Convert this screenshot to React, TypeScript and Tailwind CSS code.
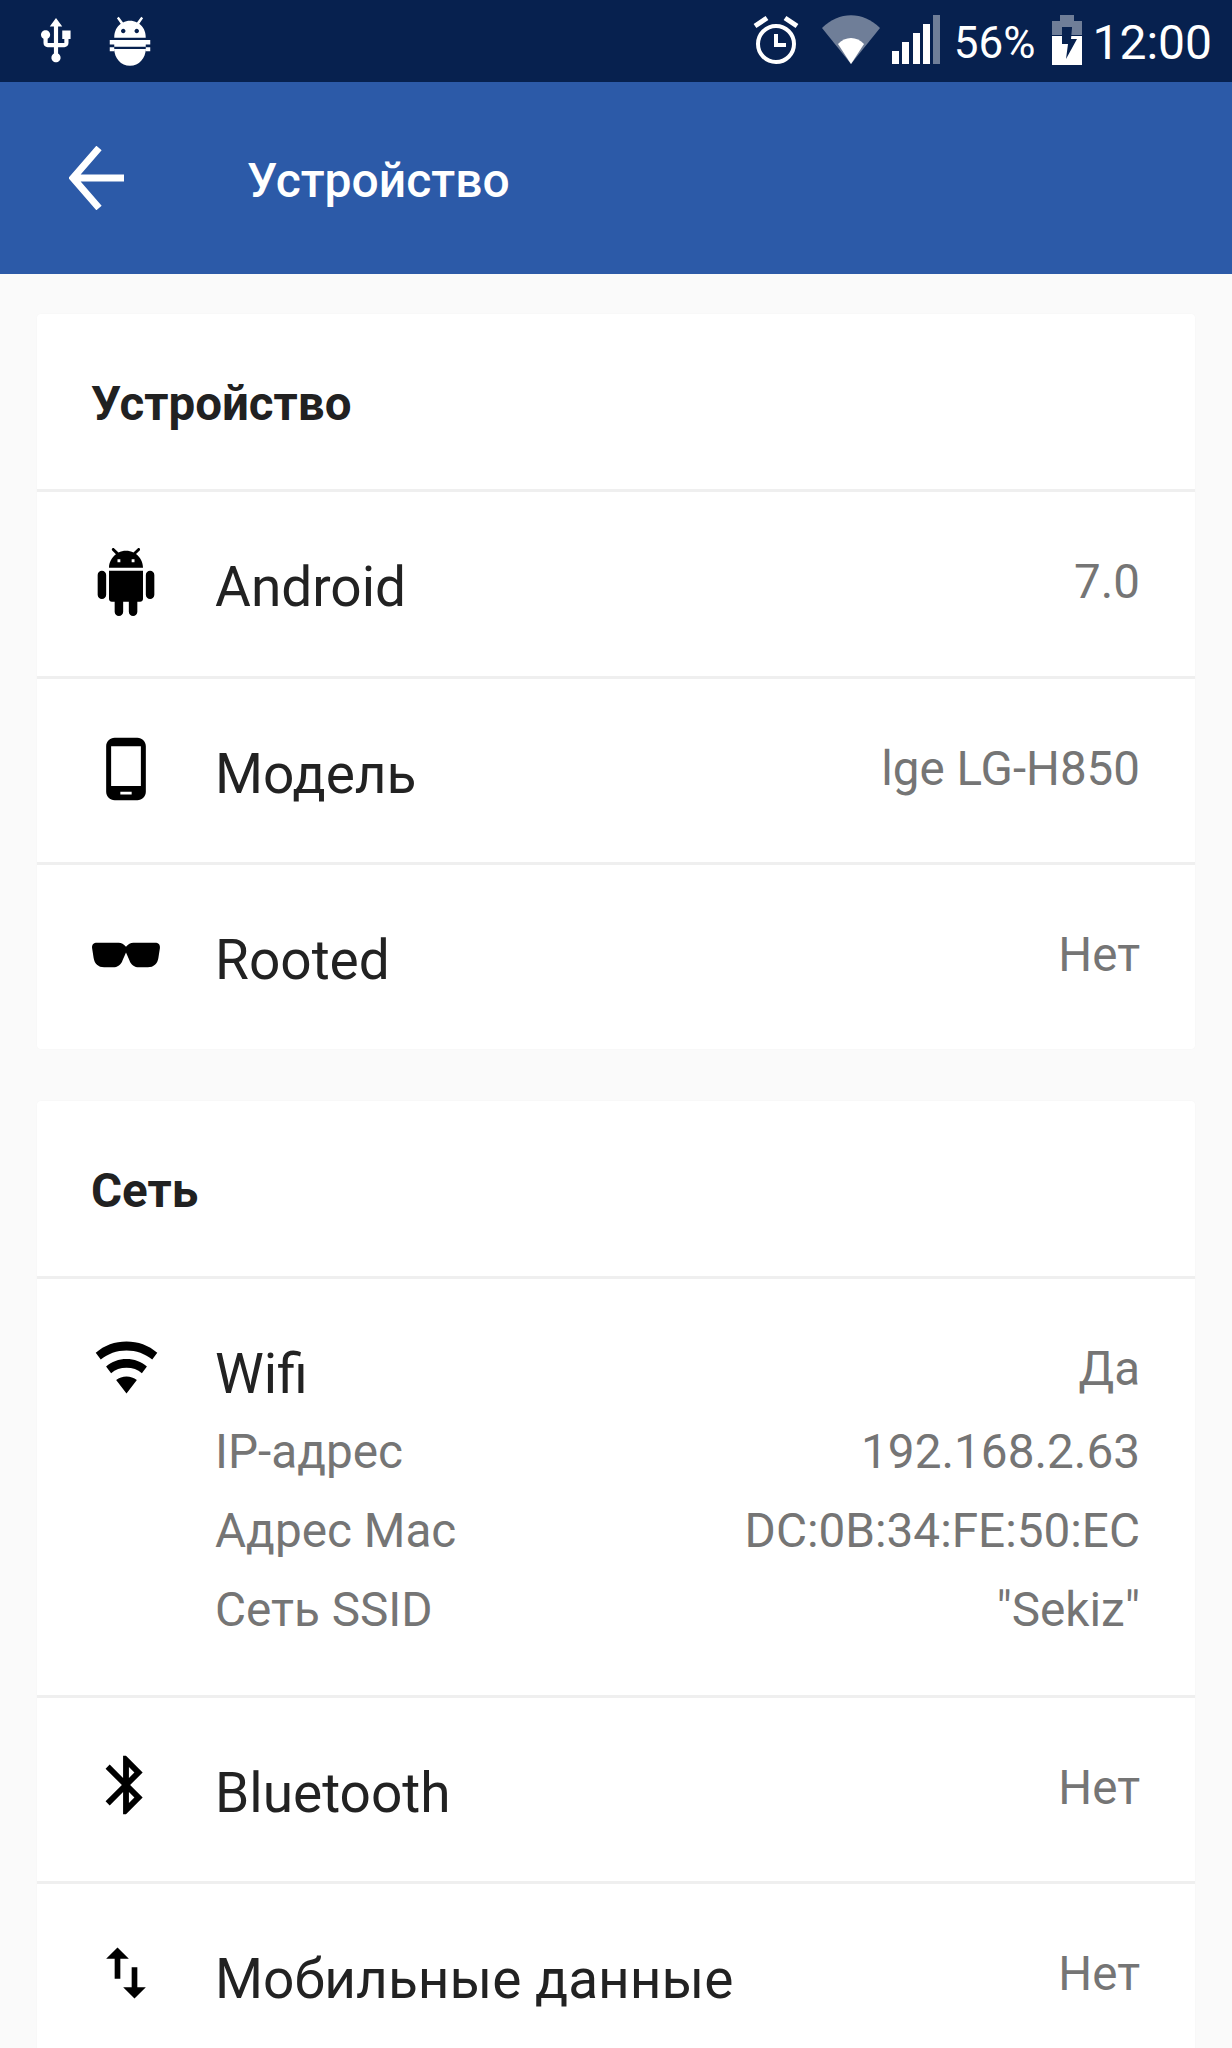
import type { ReactNode } from "react";

const PATHS = {
  android: "M6 18c0 .55.45 1 1 1h1v3.5c0 .83.67 1.5 1.5 1.5s1.5-.67 1.5-1.5V19h2v3.5c0 .83.67 1.5 1.5 1.5s1.5-.67 1.5-1.5V19h1c.55 0 1-.45 1-1V8H6v10zM3.5 8C2.67 8 2 8.67 2 9.5v7c0 .83.67 1.5 1.5 1.5S5 17.33 5 16.5v-7C5 8.67 4.33 8 3.5 8zm17 0c-.83 0-1.5.67-1.5 1.5v7c0 .83.67 1.5 1.5 1.5s1.5-.67 1.5-1.5v-7c0-.83-.67-1.5-1.5-1.5zm-4.97-5.84l1.3-1.3c.2-.2.2-.51 0-.71-.2-.2-.51-.2-.71 0l-1.48 1.48C13.85 1.23 12.95 1 12 1c-.96 0-1.86.23-2.66.63L7.85.15c-.2-.2-.51-.2-.71 0-.2.2-.2.51 0 .71l1.31 1.31C6.97 3.26 6 5.01 6 7h12c0-1.99-.97-3.75-2.47-4.84zM10 5H9V4h1v1zm5 0h-1V4h1v1z",
  phone: "M16 1H8C6.34 1 5 2.34 5 4v16c0 1.66 1.34 3 3 3h8c1.66 0 3-1.34 3-3V4c0-1.66-1.34-3-3-3zm-2 20h-4v-1h4v1zm3.25-3H6.75V4h10.5v14z",
  glasses: "M2.6 8h7c1 0 1.6.4 2.4 1.3.8-.9 1.4-1.3 2.4-1.3h7c1.1 0 1.7.6 1.6 1.7l-.5 3.3c-.3 1.9-1.5 3-3.4 3h-2.8c-1.6 0-2.7-.8-3.2-2.3L12 11.2l-1.1 2.5C10.400 15.200 9.300 16 7.700 16H4.900c-1.900 0-3.100-1.100-3.400-3L1 9.700C.9 8.600 1.500 8 2.600 8z",
  wifi: "M1.600 7.700C4.500 5.200 8.100 3.900 12 3.900s7.500 1.300 10.400 3.800l-1.700 2.300C18.300 8 15.300 6.900 12 6.900S5.700 8 3.300 10zM5.100 12.300C7 10.700 9.400 9.800 12 9.800s5 .9 6.900 2.500l-1.700 2.300c-1.400-1.200-3.200-1.800-5.200-1.800s-3.800.6-5.200 1.800zM8.500 16.900c1-.8 2.200-1.200 3.500-1.200s2.500.4 3.500 1.200L12 21.500z",
  bluetooth: "M17.710 7.710L12 2h-1v7.590L6.410 5 5 6.410 10.590 12 5 17.590 6.410 19 11 14.410V22h1l5.710-5.710-4.300-4.290 4.300-4.290zM13 5.830l1.880 1.880L13 9.590V5.830zm1.880 10.460L13 18.170v-3.760l1.880 1.880z",
  swap: "M16 17.010V10h-2v7.010h-3L15 21l4-3.990h-3zM9 3L5 6.990h3V14h2V6.990h3L9 3z",
  usb: "M15 7v4h1v2h-3V5h2l-3-4-3 4h2v8H8v-2.070c.7-.37 1.200-1.080 1.200-1.930 0-1.210-.99-2.200-2.200-2.200-1.210 0-2.200.99-2.200 2.200 0 .85.5 1.560 1.200 1.930V13c0 1.110.89 2 2 2h3v3.050c-.71.37-1.200 1.100-1.200 1.950 0 1.220.99 2.200 2.200 2.200 1.210 0 2.200-.98 2.200-2.200 0-.85-.49-1.580-1.200-1.950V15h3c1.110 0 2-.89 2-2v-2h1V7h-4z",
  adb: "M5 15.500h14c0 4-3 7.500-7 7.500s-7-3.500-7-7.500zM3 11.500h18v2h-2v1H5v-1H3zM3 14.800h2v1.700H3zM19 14.800h2v1.700h-2zM16.120 4.370l1.700-2.500-.82-.6-1.900 2.500C14.160 3.280 13.120 3 12 3s-2.160.28-3.090.75L7 1.270l-.82.6 1.700 2.500C6.140 5.640 5 7.680 5 10.500h14c0-2.820-1.140-4.860-2.880-6.130zM9 8.500c-.55 0-1-.45-1-1s.45-1 1-1 1 .45 1 1-.45 1-1 1zm6 0c-.55 0-1-.45-1-1s.45-1 1-1 1 .45 1 1-.45 1-1 1z",
};

function Icon({ d, className }: { d: string; className?: string }) {
  return (
    <svg viewBox="0 0 24 24" fill="currentColor" className={className}>
      <path d={d} />
    </svg>
  );
}

function StatusBar() {
  return (
    <div className="h-[82px] bg-[#07214f] flex items-center text-white pl-[31px] pr-[20px]">
      <Icon d={PATHS.usb} className="w-[50px] h-[50px] mt-[-1px]" />
      <Icon d={PATHS.adb} className="w-[54px] h-[54px] ml-[22px] mt-[-1px]" />
      <div className="ml-auto flex items-center">
        <svg viewBox="0 0 48 52" className="w-[48px] h-[52px] mt-[-2px]">
          <circle cx="24" cy="30" r="18" fill="none" stroke="white" strokeWidth="4" />
          <path d="M24 20v11h10" fill="none" stroke="white" strokeWidth="4" />
          <path d="M3 12L15 4M45 12L33 4" fill="none" stroke="white" strokeWidth="5" />
        </svg>
        <svg viewBox="0 0 58 50" className="w-[58px] h-[50px] ml-[22px] mt-[-2px]">
          <path d="M0 13C17 -4 41 -4 58 13L29 49z" fill="white" fillOpacity="0.42" />
          <path d="M16 29C23 21 35 21 42 29L29 49z" fill="white" />
        </svg>
        <svg viewBox="0 0 48 50" className="w-[48px] h-[50px] ml-[12px] mt-[-2px]">
          <rect x="0" y="36" width="7" height="13" fill="white" />
          <rect x="10" y="27" width="7" height="22" fill="white" />
          <rect x="21" y="18" width="7" height="31" fill="white" />
          <rect x="31" y="9" width="7" height="40" fill="white" />
          <rect x="41" y="0" width="7" height="49" fill="white" fillOpacity="0.42" />
        </svg>
        <span className="text-[44px] leading-none ml-[14px] mt-[3px]">56%</span>
        <svg viewBox="0 0 32 50" className="w-[32px] h-[50px] ml-[16px] mt-[-2px]">
          <path d="M9 0h14v6h8v14H1V6h8z" fill="white" fillOpacity="0.42" />
          <path d="M1 21h30v29H1z" fill="white" />
          <path d="M11 12h10v1l-1 11h6L15 44l2-15h-6z" fill="#07214f" />
        </svg>
        <span className="text-[48px] leading-none ml-[9px] mt-[3px]">12:00</span>
      </div>
    </div>
  );
}

function AppBar() {
  return (
    <div className="h-[192px] bg-[#2c5aa8] flex items-center text-white pl-[69px]">
      <svg viewBox="0 0 55 64" className="w-[55px] h-[64px] mt-[-1px]">
        <path d="M30 2L4 32l26 30M4 32h51" fill="none" stroke="white" strokeWidth="7" />
      </svg>
      <h1 className="ml-[123px] mt-[5px] text-[48px] font-medium leading-none">Устройство</h1>
    </div>
  );
}

function Row({ icon, label, value, children, last }: { icon: ReactNode; label: string; value: string; children?: ReactNode; last?: boolean }) {
  return (
    <div className={`pl-[55px] pr-[55px] pt-[56px] flex items-start ${children ? "pb-[45px]" : "pb-[49.5px]"} ${last ? "" : "border-b-[3px] border-[#efefef]"}`}>
      <div className="w-[68px] h-[72px] -mt-[2px] flex items-center justify-center shrink-0 text-black">{icon}</div>
      <div className="ml-[56px] -translate-x-px flex-1 min-w-0">
        <div className="flex justify-between h-[78px]">
          <span className="text-[55px] leading-[78px] text-[#222]">{label}</span>
          <span className="text-[47.5px] leading-[68px] text-[#757575] translate-x-px">{value}</span>
        </div>
        {children}
      </div>
    </div>
  );
}

function SubRow({ label, value }: { label: string; value: string }) {
  return (
    <div className="flex justify-between h-[79px] text-[47.7px] leading-[79px] text-[#757575]">
      <span>{label}</span>
      <span className="translate-x-px">{value}</span>
    </div>
  );
}

function Card({ title, children }: { title: string; children: ReactNode }) {
  return (
    <section className="bg-white rounded-[4px] mx-[37px] shadow-[0_0_2px_rgba(0,0,0,0.03)]">
      <h2 className="h-[178px] flex items-center pl-[54px] pt-[7px] text-[47.5px] font-bold text-[#212121] border-b-[3px] border-[#efefef]">{title}</h2>
      {children}
    </section>
  );
}

export default function App() {
  return (
    <div className="w-[1232px] h-[2048px] overflow-hidden bg-[#fafafa] font-['Roboto',sans-serif]">
      <StatusBar />
      <AppBar />
      <div className="pt-[40px] flex flex-col gap-[52px]">
        <Card title="Устройство">
          <Row icon={<Icon d={PATHS.android} className="w-[72px] h-[72px]" />} label="Android" value="7.0" />
          <Row icon={<Icon d={PATHS.phone} className="w-[70px] h-[70px]" />} label="Модель" value="lge LG-H850" />
          <Row icon={<Icon d={PATHS.glasses} className="w-[74px] h-[74px] shrink-0" />} label="Rooted" value="Нет" last />
        </Card>
        <Card title="Сеть">
          <Row icon={<Icon d={PATHS.wifi} className="w-[71px] h-[71px] shrink-0 -mt-[6px]" />} label="Wifi" value="Да">
            <SubRow label="IP-адрес" value="192.168.2.63" />
            <SubRow label="Адрес Mac" value="DC:0B:34:FE:50:EC" />
            <SubRow label="Сеть SSID" value={'"Sekiz"'} />
          </Row>
          <Row icon={<Icon d={PATHS.bluetooth} className="w-[70px] h-[70px] shrink-0 -mt-[5px]" />} label="Bluetooth" value="Нет" />
          <Row icon={<Icon d={PATHS.swap} className="w-[68px] h-[68px] -mt-[3px]" />} label="Мобильные данные" value="Нет" last />
        </Card>
      </div>
    </div>
  );
}
